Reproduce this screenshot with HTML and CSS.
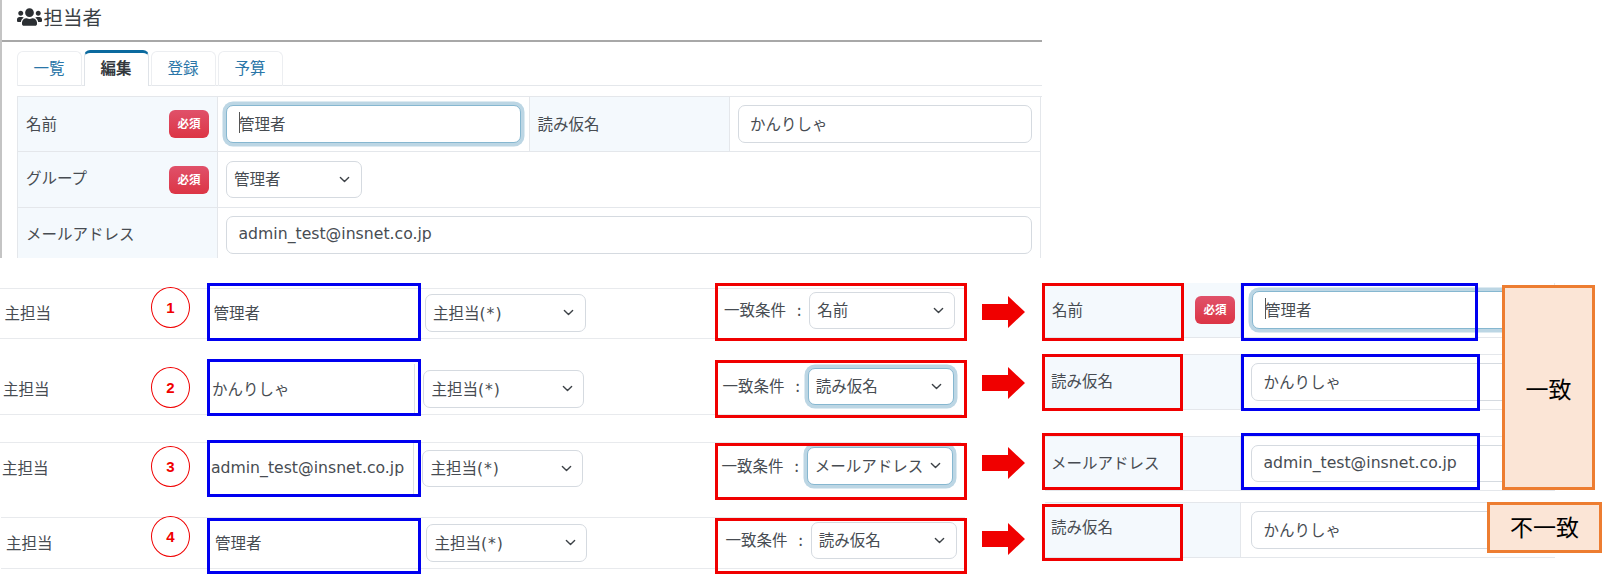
FILE: index.html
```html
<!DOCTYPE html>
<html lang="ja">
<head>
<meta charset="utf-8">
<title>担当者</title>
<link rel="stylesheet" href="styles.css">
</head>
<body>
<main class="canvas">
  <section class="window">
    <header class="win-head">
      <svg class="users" viewBox="0 0 640 512"><path d="M96 224c35.300 0 64-28.700 64-64s-28.700-64-64-64-64 28.700-64 64 28.700 64 64 64zm448 0c35.300 0 64-28.700 64-64s-28.700-64-64-64-64 28.700-64 64 28.700 64 64 64zm32 32h-64c-17.600 0-33.500 7.100-45.100 18.600 40.300 22.100 68.900 62 75.100 109.400h66c17.700 0 32-14.300 32-32v-32c0-35.300-28.700-64-64-64zm-256 0c61.900 0 112-50.100 112-112S381.900 32 320 32 208 82.100 208 144s50.100 112 112 112zm76.800 32h-8.300c-20.800 10-43.900 16-68.500 16s-47.600-6-68.500-16h-8.300C179.600 288 128 339.600 128 403.200V432c0 26.500 21.500 48 48 48h288c26.500 0 48-21.500 48-48v-28.800c0-63.600-51.600-115.200-115.200-115.200zm-223.700-13.400C161.500 263.100 145.600 256 128 256H64c-35.300 0-64 28.700-64 64v32c0 17.700 14.300 32 32 32h65.900c6.300-47.400 34.900-87.300 75.200-109.400z"/></svg>
      <h1 class="win-title">担当者</h1>
    </header>
    <nav class="tabs">
      <a class="tab">一覧</a>
      <a class="tab tab-active">編集</a>
      <a class="tab">登録</a>
      <a class="tab">予算</a>
    </nav>
    <div class="form-grid">
      <div class="th"><span>名前</span><span class="badge">必須</span></div>
      <div class="td td-first"><div class="field field-focus"><i class="caret"></i>管理者</div></div>
      <div class="th th-yomi"><span>読み仮名</span></div>
      <div class="td td-last"><div class="field">かんりしゃ</div></div>
      <div class="th th-r2"><span>グループ</span><span class="badge">必須</span></div>
      <div class="td td-wide td-r2"><div class="select select-group"><span>管理者</span><svg class="chev" viewBox="0 0 12 8"><path d="M1.500 1.500 6 6l4.500-4.500"/></svg></div></div>
      <div class="th th-r3"><span>メールアドレス</span></div>
      <div class="td td-wide td-r3"><div class="field"><span class="latin">admin_test@insnet.co.jp</span></div></div>
    </div>
  </section>

  <div class="strip strip-1">
    <div class="s-label">主担当</div>
    <div class="s-value">管理者</div>
    <div class="select s-select"><span>主担当<span class="latin asterisk">(*)</span></span><svg class="chev" viewBox="0 0 12 8"><path d="M1.500 1.500 6 6l4.500-4.500"/></svg></div>
    <div class="cond"><span class="cond-label">一致条件<b class="colon">:</b></span><div class="select c-select"><span>名前</span><svg class="chev" viewBox="0 0 12 8"><path d="M1.500 1.500 6 6l4.500-4.500"/></svg></div></div>
  </div>
  <div class="strip strip-2">
    <div class="s-label">主担当</div>
    <div class="s-value s-value-rule">かんりしゃ</div>
    <div class="select s-select"><span>主担当<span class="latin asterisk">(*)</span></span><svg class="chev" viewBox="0 0 12 8"><path d="M1.500 1.500 6 6l4.500-4.500"/></svg></div>
    <div class="cond"><span class="cond-label">一致条件<b class="colon">:</b></span><div class="select c-select select-focus"><span>読み仮名</span><svg class="chev" viewBox="0 0 12 8"><path d="M1.500 1.500 6 6l4.500-4.500"/></svg></div></div>
  </div>
  <div class="strip strip-3">
    <div class="s-label">主担当</div>
    <div class="s-value s-value-rule"><span class="latin">admin_test@insnet.co.jp</span></div>
    <div class="select s-select"><span>主担当<span class="latin asterisk">(*)</span></span><svg class="chev" viewBox="0 0 12 8"><path d="M1.500 1.500 6 6l4.500-4.500"/></svg></div>
    <div class="cond"><span class="cond-label">一致条件<b class="colon">:</b></span><div class="select c-select select-focus"><span>メールアドレス</span><svg class="chev" viewBox="0 0 12 8"><path d="M1.500 1.500 6 6l4.500-4.500"/></svg></div></div>
  </div>
  <div class="strip strip-4">
    <div class="s-label">主担当</div>
    <div class="s-value">管理者</div>
    <div class="select s-select"><span>主担当<span class="latin asterisk">(*)</span></span><svg class="chev" viewBox="0 0 12 8"><path d="M1.500 1.500 6 6l4.500-4.500"/></svg></div>
    <div class="cond"><span class="cond-label">一致条件<b class="colon">:</b></span><div class="select c-select"><span>読み仮名</span><svg class="chev" viewBox="0 0 12 8"><path d="M1.500 1.500 6 6l4.500-4.500"/></svg></div></div>
  </div>

  <div class="clip clip-1">
    <div class="c-th c-th-badge"><span>名前</span><span class="badge">必須</span></div>
    <div class="c-td"><div class="field field-focus"><i class="caret"></i>管理者</div></div>
  </div>
  <div class="clip clip-2">
    <div class="c-th"><span>読み仮名</span></div>
    <div class="c-td"><div class="field">かんりしゃ</div></div>
  </div>
  <div class="clip clip-3">
    <div class="c-th"><span>メールアドレス</span></div>
    <div class="c-td"><div class="field"><span class="latin">admin_test@insnet.co.jp</span></div></div>
  </div>
  <div class="clip clip-4">
    <div class="c-th"><span>読み仮名</span></div>
    <div class="c-td"><div class="field">かんりしゃ</div></div>
  </div>

  <span class="num num-1">1</span>
  <span class="num num-2">2</span>
  <span class="num num-3">3</span>
  <span class="num num-4">4</span>

  <div class="mark blue blue-1"></div>
  <div class="mark blue blue-2"></div>
  <div class="mark blue blue-3"></div>
  <div class="mark blue blue-4"></div>
  <div class="mark blue blue-r1"></div>
  <div class="mark blue blue-r2"></div>
  <div class="mark blue blue-r3"></div>

  <div class="mark red red-1"></div>
  <div class="mark red red-2"></div>
  <div class="mark red red-3"></div>
  <div class="mark red red-4"></div>
  <div class="mark red red-r1"></div>
  <div class="mark red red-r2"></div>
  <div class="mark red red-r3"></div>
  <div class="mark red red-r4"></div>

  <svg class="arrow arrow-1" viewBox="0 0 43 32"><path d="M0 8h26V0l17 16-17 16v-8H0z"/></svg>
  <svg class="arrow arrow-2" viewBox="0 0 43 32"><path d="M0 8h26V0l17 16-17 16v-8H0z"/></svg>
  <svg class="arrow arrow-3" viewBox="0 0 43 32"><path d="M0 8h26V0l17 16-17 16v-8H0z"/></svg>
  <svg class="arrow arrow-4" viewBox="0 0 43 32"><path d="M0 8h26V0l17 16-17 16v-8H0z"/></svg>

  <div class="verdict verdict-match">一致</div>
  <div class="verdict verdict-miss">不一致</div>
</main>
</body>
</html>
```

FILE: styles.css
```css
* { box-sizing: border-box; }
html, body { margin: 0; padding: 0; background: #fff; }
body {
  font-family: "Noto Sans CJK JP", "Noto Sans", sans-serif;
  font-size: 15.500px;
  color: #474c52;
}
.canvas { position: relative; width: 1602px; height: 575px; overflow: hidden; }
.latin { font-family: "DejaVu Sans", "Noto Sans CJK JP", sans-serif; font-size: 15.700px; }
.asterisk { letter-spacing: 1px; }

/* top window */
.window { width: 1042px; height: 258px; border-left: 2px solid #c4c4c4; overflow: hidden; }
.win-head {
  height: 42px;
  display: flex;
  align-items: center;
  gap: 2px;
  padding: 0 0 6px 14.500px;
  border-bottom: 2px solid #a8a8a8;
}
.users { width: 25px; height: 20px; fill: #2b2f33; }
.win-title { margin: 0; font-size: 19.500px; font-weight: 400; color: #3a3f44; line-height: 1; }
.tabs {
  display: flex;
  gap: 2px;
  height: 44px;
  margin-left: 14.500px;
  padding-top: 9px;
  border-bottom: 1px solid #e4e7eb;
}
.tab {
  width: 65px;
  height: 35px;
  display: flex;
  align-items: center;
  justify-content: center;
  padding-bottom: 5px;
  border: 1px solid #eceef1;
  border-bottom: 0;
  border-radius: 6px 6px 0 0;
  color: #2a76a8;
}
.tab-active {
  height: 36px;
  margin-top: -1px;
  border: 1px solid #dfe3e8;
  border-top: 3px solid #0b6a9f;
  border-bottom: 0;
  background: #fff;
  color: #33383d;
  font-weight: 700;
}
.form-grid {
  display: grid;
  grid-template-columns: 200px 311.600px 200px 311.400px;
  grid-template-rows: 55px 56px 56px;
  margin: 10px 0 0 15px;
  border-top: 1px solid #e4e7eb;
  border-left: 1px solid #e4e7eb;
}
.th {
  display: flex;
  align-items: center;
  justify-content: space-between;
  padding: 0 8px;
  background: #f4f9fd;
  border-right: 1px solid #e4e7eb;
  border-bottom: 1px solid #e4e7eb;
}
.th > span:first-child { padding-bottom: 3px; }
.th-r2 > span:first-child { margin-top: -3px; }
.th-r3 { border-bottom: 0; }
.th-r3 > span:first-child { padding-bottom: 6px; }
.td {
  display: flex;
  align-items: center;
  padding: 0 8px;
  border-right: 1px solid #e4e7eb;
  border-bottom: 1px solid #e4e7eb;
}
.td-wide { grid-column: span 3; }
.td-r3 { align-items: flex-start; padding-top: 8px; border-bottom: 0; }

.badge {
  flex: none;
  width: 40px;
  height: 28px;
  display: flex;
  align-items: center;
  justify-content: center;
  padding-bottom: 2px;
  border-radius: 6px;
  background: linear-gradient(#e0516a, #dc3545);
  color: #fff;
  font-size: 11.500px;
  font-weight: 700;
}
.field {
  width: 100%;
  height: 37.500px;
  display: flex;
  align-items: center;
  padding: 0 0 3px 11.500px;
  background: #fff;
  border: 1px solid #d5dae0;
  border-radius: 7px;
  white-space: nowrap;
}
.field-focus {
  border: 1px solid #86b7d0;
  box-shadow: 0 0 0 3.500px #bcd6e4;
}
.caret { width: 1.500px; height: 21px; margin-right: -1px; background: #555; flex: none; }
.select {
  height: 37.500px;
  display: flex;
  align-items: center;
  justify-content: space-between;
  padding: 0 10.500px 0 7px;
  background: #fff;
  border: 1px solid #d5dae0;
  border-radius: 7px;
  white-space: nowrap;
}
.select > span { padding-bottom: 3px; }
.select-group { width: 135.500px; }
.select-focus { border: 1px solid #86b7d0; box-shadow: 0 0 0 3.500px #bcd6e4; }
.chev { width: 11px; height: 7.500px; flex: none; fill: none; stroke: #3d4247; stroke-width: 1.500; stroke-linecap: round; stroke-linejoin: round; }

/* pasted row strips */
.strip {
  position: absolute;
  display: flex;
  align-items: center;
  width: 964px;
  padding-left: 4.600px;
  border-top: 1px solid #e8eaed;
  border-bottom: 1px solid #e8eaed;
}
.strip-1 { left: 0; top: 287.500px; height: 51px; }
.strip-2 { left: -1.600px; top: 363px; height: 52px; border-top-color: transparent; }
.strip-3 { left: -2.600px; top: 442px; height: 53px; border-bottom-color: transparent; }
.strip-4 { left: 1.400px; top: 517px; height: 52px; }
.s-label { flex: 0 0 208.900px; padding-bottom: 3px; }
.s-value { flex: 0 0 203px; height: 100%; display: flex; align-items: center; margin-right: 8.500px; padding-bottom: 3px; white-space: nowrap; }
.s-value-rule { border-right: 1px solid #dde0e4; }
.s-select { flex: 0 0 161px; }
.cond { margin-left: 138px; margin-top: -5px; display: flex; align-items: center; }
.cond-label { flex: 0 0 85.300px; padding-bottom: 3px; white-space: nowrap; }
.colon { display: inline-block; margin-left: 11px; font-weight: 400; }
.c-select { flex: 0 0 146px; width: 146px; }

/* pasted target-field clips */
.clip { position: absolute; left: 1045px; width: 510px; display: flex; border-bottom: 1px solid #e4e7eb; }
.clip-1 { top: 283px; height: 55px; border-right: 1px solid #e4e7eb; }
.clip-2 { top: 354px; height: 56px; border-top: 1px solid #e4e7eb; }
.clip-3 { top: 436px; height: 55px; border-top: 1px solid #e4e7eb; }
.clip-4 { top: 502px; height: 56px; border-top: 1px solid #e4e7eb; }
.c-th {
  flex: 0 0 196px;
  display: flex;
  align-items: center;
  padding: 0 6px;
  background: #f4f9fd;
  border-right: 1px solid #e4e7eb;
}
.c-th > span:first-child { padding-bottom: 3px; }
.c-th-badge { justify-content: space-between; }
.clip-4 .c-th > span { margin-top: -6px; }
.clip-2 .c-th > span { margin-top: -1px; }
.c-td { flex: 1; display: flex; align-items: center; padding: 0 0 0 10px; }
.clip-1 .c-td { padding-left: 11px; }
.clip-1 .c-th { padding-left: 7px; padding-right: 5px; }

/* annotations */
.mark { position: absolute; border: 3px solid; }
.blue { border-color: #0000f0; }
.red { border-color: #f00000; }
.blue-1 { left: 207px; top: 283px; width: 214px; height: 58px; }
.blue-2 { left: 207px; top: 359px; width: 214px; height: 57px; }
.blue-3 { left: 207px; top: 440px; width: 214px; height: 57px; }
.blue-4 { left: 207px; top: 518px; width: 214px; height: 56px; }
.blue-r1 { left: 1241px; top: 283px; width: 237px; height: 58px; }
.blue-r2 { left: 1241px; top: 354px; width: 239px; height: 57px; }
.blue-r3 { left: 1241px; top: 433px; width: 239px; height: 57px; }
.red-1 { left: 715px; top: 283px; width: 252px; height: 58px; }
.red-2 { left: 715px; top: 360px; width: 252px; height: 58px; }
.red-3 { left: 715px; top: 443px; width: 252px; height: 57px; }
.red-4 { left: 715px; top: 518px; width: 252px; height: 56px; }
.red-r1 { left: 1042px; top: 283px; width: 142px; height: 58px; }
.red-r2 { left: 1042px; top: 354px; width: 141px; height: 57px; }
.red-r3 { left: 1042px; top: 433px; width: 141px; height: 57px; }
.red-r4 { left: 1042px; top: 504px; width: 141px; height: 57px; }

.num {
  position: absolute;
  left: 151px;
  width: 39px;
  height: 41px;
  display: flex;
  align-items: center;
  justify-content: center;
  background: #fff;
  border: 1.500px solid #f00000;
  border-radius: 50%;
  color: #f00000;
  font-family: "Liberation Sans", sans-serif;
  font-size: 15px;
  font-weight: 700;
}
.num-1 { top: 286.500px; }
.num-2 { top: 367px; }
.num-3 { top: 445.500px; }
.num-4 { top: 515.500px; }

.arrow { position: absolute; left: 982px; width: 43px; height: 32px; fill: #f00000; }
.arrow-1 { top: 296px; }
.arrow-2 { top: 367px; }
.arrow-3 { top: 447px; }
.arrow-4 { top: 523px; }

.verdict {
  position: absolute;
  display: flex;
  align-items: center;
  justify-content: center;
  background: #fbe5d6;
  border: 3px solid #ed7d31;
  color: #000;
  font-size: 23px;
}
.verdict-match { left: 1502px; top: 285px; width: 93px; height: 205px; }
.verdict-miss { left: 1487px; top: 502px; width: 115px; height: 51px; padding-bottom: 3px; }
```
